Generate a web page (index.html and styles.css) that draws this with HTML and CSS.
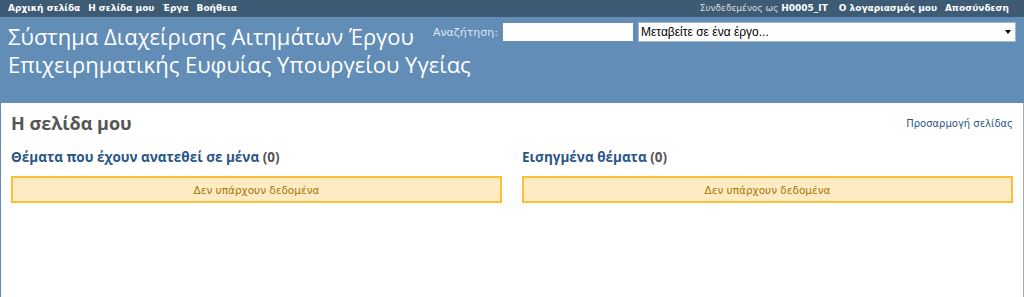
FILE: index.html
```html
<!DOCTYPE html>
<html lang="el">
<head>
    <meta charset="UTF-8">
    <title>Η σελίδα μου</title>
    <link rel="stylesheet" href="styles.css">
</head>
<body>
    <div id="top-menu">
        <div class="account">
            <span class="loggedas">Συνδεδεμένος ως <a href="#">H0005_IT</a></span>
            <a href="#">Ο λογαριασμός μου</a>
            <a href="#">Αποσύνδεση</a>
        </div>
        <div class="main-links">
            <a href="#">Αρχική σελίδα</a>
            <a href="#">Η σελίδα μου</a>
            <a href="#">Έργα</a>
            <a href="#">Βοήθεια</a>
        </div>
    </div>

    <div id="header">
        <div id="quick-search">
            <label for="q">Αναζήτηση:</label>
            <input type="text" id="q" name="q">
            <div class="jump">
                <select id="jump">
                    <option>Μεταβείτε σε ένα έργο...</option>
                </select>
            </div>
        </div>
        <h1>Σύστημα Διαχείρισης Αιτημάτων Έργου<br>Επιχειρηματικής Ευφυίας Υπουργείου Υγείας</h1>
    </div>

    <div id="content">
        <div class="page-title">
            <h2>Η σελίδα μου</h2>
            <a href="#" class="personalize">Προσαρμογή σελίδας</a>
        </div>
        <div class="split">
            <div class="box">
                <h3><a href="#">Θέματα που έχουν ανατεθεί σε μένα</a> (0)</h3>
                <p class="nodata">Δεν υπάρχουν δεδομένα</p>
            </div>
            <div class="box">
                <h3><a href="#">Εισηγμένα θέματα</a> (0)</h3>
                <p class="nodata">Δεν υπάρχουν δεδομένα</p>
            </div>
        </div>
    </div>
</body>
</html>
```

FILE: styles.css
```css
html, body {
    height: 100%;
}

body {
    margin: 0;
    font-family: 'DejaVu Sans', Verdana, sans-serif;
    font-size: 12px;
    color: #333;
    background-color: #fff;
    display: flex;
    flex-direction: column;
}

a {
    color: #2a5685;
    text-decoration: none;
}

#top-menu {
    background-color: #3e5b76;
    color: #fff;
    height: 17px;
    padding: 0 10px 0 8px;
    font-size: 9px;
    line-height: 17px;
}

#top-menu a {
    color: #fff;
    font-weight: bold;
    margin-right: 5px;
}

.main-links {
    float: left;
}

.account {
    float: right;
}

.account a:last-child {
    margin-right: 0;
}

.loggedas {
    color: #ddd;
    margin-right: 3px;
}

.loggedas a {
    margin-right: 0;
}

#header {
    background-color: #628db6;
    color: #fff;
    height: 86px;
    padding: 0 8px;
}

#quick-search {
    float: right;
    margin-top: 5px;
    display: flex;
    align-items: center;
    gap: 4px;
}

#quick-search label {
    color: #dde6ef;
    font-size: 11px;
}

#quick-search input {
    width: 126px;
    height: 18px;
    padding: 0 2px;
    border: 1px solid #6a8fb2;
    font-size: 12px;
    margin: 0;
}

.jump {
    position: relative;
}

.jump select {
    display: block;
    width: 378px;
    height: 20px;
    padding: 0 2px;
    border: 1px solid #a0b6cc;
    background-color: #fff;
    color: #000;
    font-family: 'Liberation Sans', Arial, sans-serif;
    font-size: 12px;
    margin: 0;
    appearance: none;
    -webkit-appearance: none;
}

/* small black arrow of the select */
.jump::after {
    content: "";
    position: absolute;
    right: 5px;
    top: 8px;
    border-left: 3px solid transparent;
    border-right: 3px solid transparent;
    border-top: 4px solid #000;
    pointer-events: none;
}

#header h1 {
    margin: 0;
    padding-top: 5px;
    font-family: 'Open Sans', sans-serif;
    font-size: 22px;
    font-weight: normal;
    line-height: 28px;
}

#content {
    flex: 1;
    border-left: 1px solid #628db6;
    border-right: 1px solid #a9a9a9;
    padding: 8px 10px 10px 10px;
}

.page-title {
    display: flex;
    justify-content: space-between;
    align-items: center;
}

h2 {
    margin: 0;
    font-family: 'Open Sans', sans-serif;
    font-size: 18px;
    color: #555;
}

.personalize {
    font-size: 10px;
}

.split {
    display: flex;
    justify-content: space-between;
}

.box {
    width: 49%;
}

h3 {
    margin: 13px 0 10px 0;
    font-family: 'Open Sans', sans-serif;
    font-size: 13.5px;
    color: #555;
}

.nodata {
    margin: 0;
    padding: 4px;
    height: 15px;
    background-color: #ffebc1;
    border: 2px solid #fdbf3b;
    color: #a6750c;
    text-align: center;
    font-size: 10.5px;
    line-height: 16px;
}
```
